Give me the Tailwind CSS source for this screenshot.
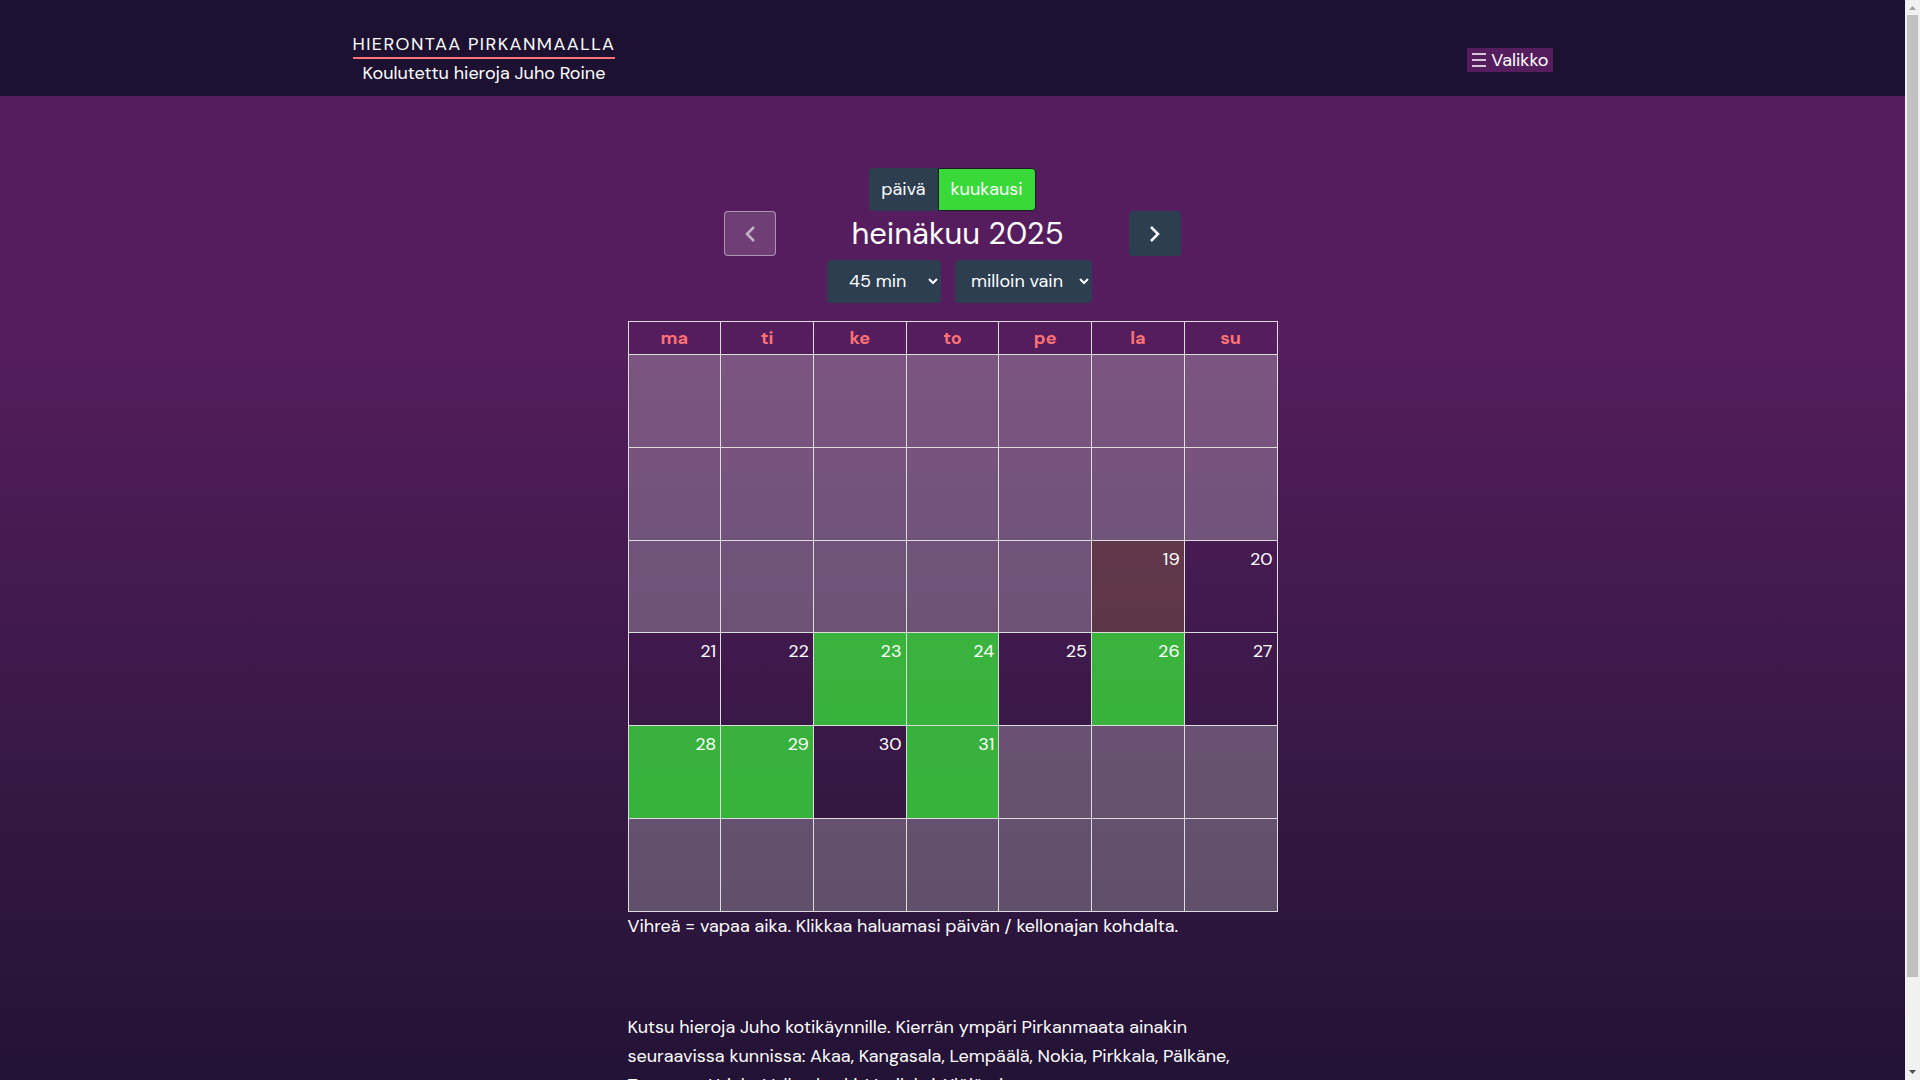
<!DOCTYPE html>
<html lang="fi">
  <head>
    <meta charset="UTF-8" />
    <meta name="viewport" content="width=device-width, initial-scale=1.0" />
    <title>Hierontaa Pirkanmaalla</title>
    <script src="https://cdn.jsdelivr.net/npm/@tailwindcss/browser@4"></script>
  </head>

  <body class="flex h-screen overflow-hidden bg-[#1c1130] font-['DM_Sans','Inter',sans-serif] text-[18px] leading-[29px] text-white">
    <div class="flex-1 h-full overflow-hidden">
      <header class="h-24 bg-[#1c1130]">
        <div class="max-w-[1200px] h-full mx-auto flex justify-between items-center">
          <div class="text-center pt-[18px]">
            <a href="#" class="block uppercase tracking-[0.08em] leading-[26px] pt-1 border-b-2 border-[#ff7276]">Hierontaa Pirkanmaalla</a>
            <p>Koulutettu hieroja Juho Roine</p>
          </div>
          <button class="flex items-center gap-1 h-6 px-1 mt-6 bg-[#551d5d]">
            <svg class="w-4 h-4" viewBox="0 0 16 16" stroke="#fff" stroke-width="1.5">
              <path d="M1 2h14M1 8h14M1 14h14" />
            </svg>
            Valikko
          </button>
        </div>
      </header>

      <main class="min-h-full pt-[72px] bg-linear-to-b from-[#551d5d] from-22% to-[#1c1130]">
        <div class="max-w-[650px] mx-auto">
          <div class="w-[457px] mx-auto mb-[18px]">
            <div class="flex justify-center">
              <button id="dayView" class="h-[43px] px-3 rounded-l bg-[#2c3e50]">päivä</button>
              <button id="monthView" class="h-[43px] px-3 rounded-r border border-[#151e27] bg-[#38d939]">kuukausi</button>
            </div>
            <div class="flex justify-between items-center mb-1">
              <button disabled aria-label="Edellinen" class="w-[52px] h-[45px] flex items-center justify-center rounded border border-white/45 bg-white/15 text-white/60">
                <svg class="w-6 h-6" viewBox="0 0 24 24" fill="none" stroke="currentColor" stroke-width="2.5"><path d="M16 5l-7 7 7 7" /></svg>
              </button>
              <h2 class="text-[31px] pl-[10px]">heinäkuu 2025</h2>
              <button aria-label="Seuraava" class="w-[52px] h-[45px] flex items-center justify-center rounded bg-[#2c3e50]">
                <svg class="w-6 h-6" viewBox="0 0 24 24" fill="none" stroke="currentColor" stroke-width="2.5"><path d="M8 5l7 7-7 7" /></svg>
              </button>
            </div>
            <div class="flex justify-center gap-[14px] pl-[14px]">
              <select aria-label="Kesto" class="w-[114px] h-[43px] pl-[18px] pb-px rounded bg-[#2c3e50]">
                <option>45 min</option>
                <option>60 min</option>
                <option>90 min</option>
              </select>
              <select aria-label="Kellonaika" class="w-[137px] h-[43px] pl-3 pb-px rounded bg-[#2c3e50]">
                <option>milloin vain</option>
                <option>aamulla</option>
                <option>illalla</option>
              </select>
            </div>
          </div>

          <table class="w-full h-[591px] table-fixed border-collapse">
            <thead>
              <tr class="h-[33px] text-[#ff7276]">
                <th class="border border-[#ddd]">ma</th>
                <th class="border border-[#ddd]">ti</th>
                <th class="border border-[#ddd]">ke</th>
                <th class="border border-[#ddd]">to</th>
                <th class="border border-[#ddd]">pe</th>
                <th class="border border-[#ddd]">la</th>
                <th class="border border-[#ddd]">su</th>
              </tr>
            </thead>
            <tbody id="days"></tbody>
          </table>
          <p>Vihreä = vapaa aika. Klikkaa haluamasi päivän / kellonajan kohdalta.</p>
          <p class="mt-[72px]">
            Kutsu hieroja Juho kotikäynnille. Kierrän ympäri Pirkanmaata ainakin seuraavissa kunnissa: Akaa, Kangasala, Lempäälä, Nokia, Pirkkala, Pälkäne, Tampere, Urjala, Valkeakoski, Vesilahti, Ylöjärvi.
          </p>
        </div>
      </main>
    </div>

    <!-- scrollbar -->
    <div class="w-[15px] h-full flex flex-col items-center justify-between bg-[#f1f1f1]">
      <svg class="w-[15px] h-[15px]" viewBox="0 0 15 15"><path d="M4 10h7L7.5 6z" fill="#a3a3a3" /></svg>
      <div class="w-[11px] flex-1 mb-[88px] bg-[#c1c1c1]"></div>
      <svg class="w-[15px] h-[15px]" viewBox="0 0 15 15"><path d="M4 5h7L7.5 9z" fill="#505050" /></svg>
    </div>

    <script>
      const days = document.getElementById("days");
      const free = [23, 24, 26, 28, 29, 31];
      const today = 19;

      // past days and days outside the month stay grey and empty
      for (let week = 0; week < 6; week++) {
        const tr = document.createElement("tr");
        tr.className = "h-[92px]";
        for (let i = 0; i < 7; i++) {
          const day = week * 7 + i;
          const td = document.createElement("td");
          let color = "bg-[rgba(215,215,215,0.3)]";
          if (day >= today && day <= 31) {
            color = "";
            if (day === today) color = "bg-[rgba(255,220,40,0.15)]";
            if (free.includes(day)) color = "bg-[#38d939]/80";
            td.textContent = day;
          }
          td.className = `border border-[#ddd] pt-1 pr-1 align-top text-right ${color}`;
          tr.appendChild(td);
        }
        days.appendChild(tr);
      }
    </script>
  </body>
</html>
